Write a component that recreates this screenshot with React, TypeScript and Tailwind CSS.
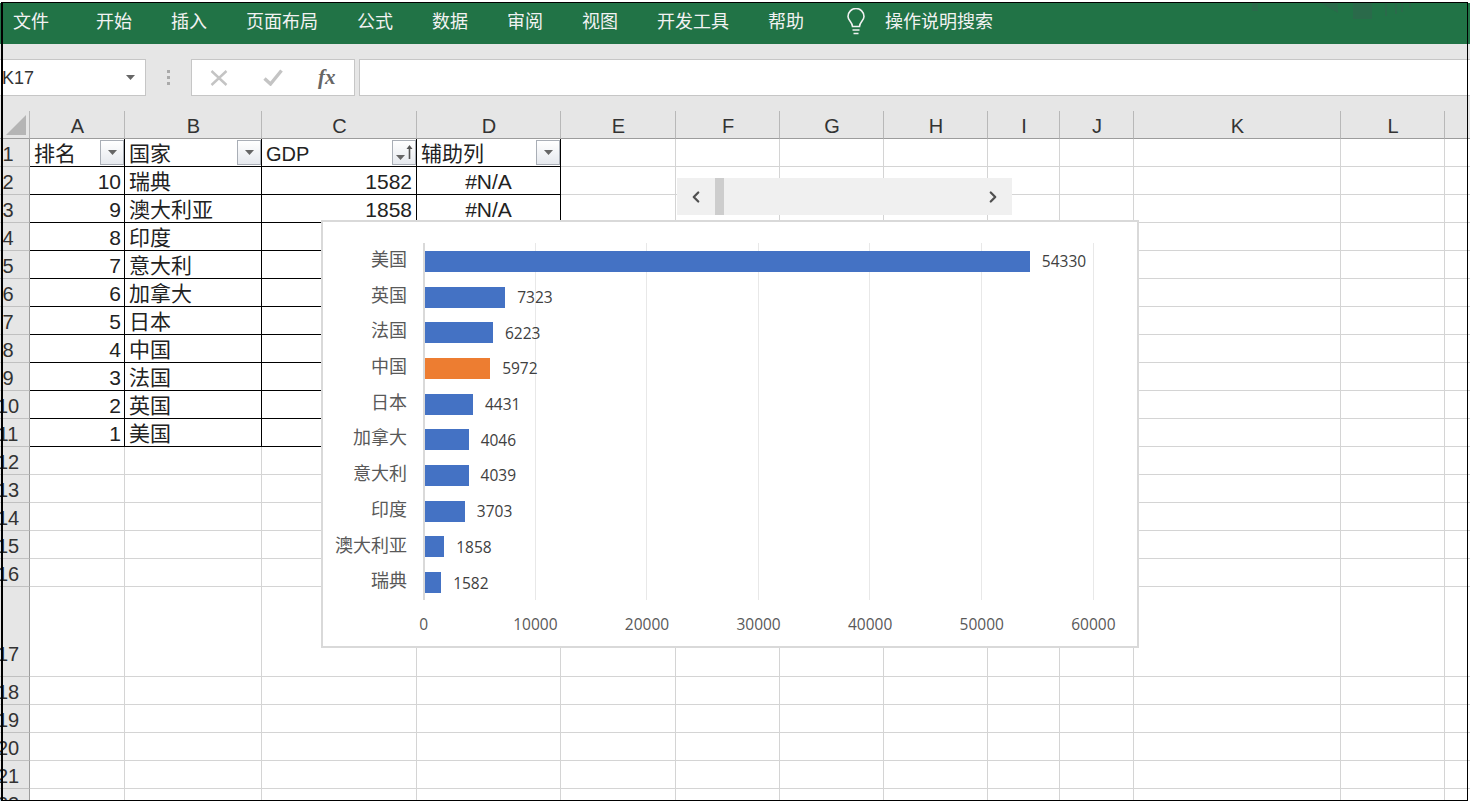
import { ChevronLeft, ChevronRight } from 'lucide-react'

const font = { fontFamily: '"Liberation Sans", "Noto Sans CJK SC", sans-serif' }

const TABS = ['开始', '插入', '页面布局', '公式', '数据', '审阅', '视图', '开发工具', '帮助']
const COLUMNS = [
  { name: 'A', width: 'w-[95px]' },
  { name: 'B', width: 'w-[137px]' },
  { name: 'C', width: 'w-[155px]' },
  { name: 'D', width: 'w-[144px]' },
  { name: 'E', width: 'w-[115px]' },
  { name: 'F', width: 'w-[104px]' },
  { name: 'G', width: 'w-[104px]' },
  { name: 'H', width: 'w-[104px]' },
  { name: 'I', width: 'w-[72px]' },
  { name: 'J', width: 'w-[74px]' },
  { name: 'K', width: 'w-[207px]' },
  { name: 'L', width: 'w-[104px]' },
  { name: '', width: 'w-[40px]' },
]

const DATA = [
  { rank: 10, country: '瑞典', gdp: 1582 },
  { rank: 9, country: '澳大利亚', gdp: 1858 },
  { rank: 8, country: '印度', gdp: 3703 },
  { rank: 7, country: '意大利', gdp: 4039 },
  { rank: 6, country: '加拿大', gdp: 4046 },
  { rank: 5, country: '日本', gdp: 4431 },
  { rank: 4, country: '中国', gdp: 5972 },
  { rank: 3, country: '法国', gdp: 6223 },
  { rank: 2, country: '英国', gdp: 7323 },
  { rank: 1, country: '美国', gdp: 54330 },
]
const CHART = [...DATA].reverse()
const TICKS = [0, 10000, 20000, 30000, 40000, 50000, 60000]
const PX_PER_UNIT = 111.6 / 10000

function Caret({ className = '' }: { className?: string }) {
  return (
    <svg width="9" height="5" viewBox="0 0 9 5" className={className}>
      <path d="M0 0H9L4.5 5Z" fill="#666" />
    </svg>
  )
}

function FilterButton({ sorted = false }: { sorted?: boolean }) {
  return (
    <div className="flex h-[25px] w-[24px] shrink-0 items-center justify-center gap-[1px] border border-[#a9aeb6] bg-gradient-to-b from-white to-[#e6e9ee]">
      <Caret className={sorted ? 'mt-[9px]' : ''} />
      {sorted && (
        <svg width="7" height="14" viewBox="0 0 7 14" className="mb-[2px]">
          <path d="M3.5 0L6.5 4H4.3V14H2.7V4H0.5Z" fill="#555" />
        </svg>
      )}
    </div>
  )
}

function RowHeader({ n, tall }: { n: number; tall?: boolean }) {
  return (
    <div
      className={`flex w-[43px] shrink-0 justify-center border-r border-b border-r-[#9c9c9c] border-b-[#c0c0c0] bg-[#e6e6e6] text-[20px] text-[#333] ${
        tall ? 'h-[90px] items-end pb-[7px]' : 'h-[28px] items-center pt-[2px]'
      }`}
    >
      {n}
    </div>
  )
}

function EmptyCells({ tall, from = 0 }: { tall?: boolean; from?: number }) {
  return (
    <>
      {COLUMNS.slice(from).map((col) => (
        <div
          key={col.name}
          className={`${col.width} shrink-0 border-r border-b border-[#d4d4d4] ${tall ? 'h-[90px]' : 'h-[28px]'}`}
        />
      ))}
    </>
  )
}

function Sheet() {
  const blank = Array.from({ length: 11 }, (_, i) => i + 12)
  return (
    <div className="ml-[-13px] flex flex-col">
      <div className="flex h-[28px] bg-[#e6e6e6] text-[20px] text-[#333]">
        <div className="flex w-[43px] shrink-0 items-end justify-end border-r border-b border-r-[#b8b8b8] border-b-[#9c9c9c] pr-[3px] pb-[3px]">
          <svg width="20" height="20" viewBox="0 0 20 20">
            <path d="M20 0V20H0Z" fill="#b5b5b5" />
          </svg>
        </div>
        {COLUMNS.map((col) => (
          <div
            key={col.name}
            className={`${col.width} flex shrink-0 items-center justify-center border-r border-b border-r-[#b8b8b8] border-b-[#9c9c9c] pt-[2px] pl-px`}
          >
            {col.name}
          </div>
        ))}
      </div>

      <div className="flex text-[21px] text-[#222]">
        <RowHeader n={1} />
        <div className="flex h-[28px] w-[95px] shrink-0 items-center justify-between border-r border-b border-black pl-[4px]">
          <span className="pt-[2px]">排名</span>
          <FilterButton />
        </div>
        <div className="flex h-[28px] w-[137px] shrink-0 items-center justify-between border-r border-b border-black pl-[4px]">
          <span className="pt-[2px]">国家</span>
          <FilterButton />
        </div>
        <div className="flex h-[28px] w-[155px] shrink-0 items-center justify-between border-r border-b border-black pl-[4px]">
          <span className="pt-[2px] text-[20px]">GDP</span>
          <FilterButton sorted />
        </div>
        <div className="flex h-[28px] w-[144px] shrink-0 items-center justify-between border-r border-b border-black pl-[4px]">
          <span className="pt-[2px]">辅助列</span>
          <FilterButton />
        </div>
        <EmptyCells from={4} />
      </div>

      {DATA.map((row, i) => (
        <div key={row.country} className="flex text-[21px] text-[#222]">
          <RowHeader n={i + 2} />
          <div className="flex h-[28px] w-[95px] shrink-0 items-center justify-end border-r border-b border-black pt-[2px] pr-[3px]">
            {row.rank}
          </div>
          <div className="flex h-[28px] w-[137px] shrink-0 items-center border-r border-b border-black pt-[2px] pl-[4px]">
            {row.country}
          </div>
          {/* the chart sits on top of these two columns from row 4 down */}
          <div className="flex h-[28px] w-[155px] shrink-0 items-center justify-end border-r border-b border-black pt-[2px] pr-[4px]">
            {i < 2 && row.gdp}
          </div>
          <div className="flex h-[28px] w-[144px] shrink-0 items-center justify-center border-r border-b border-black pt-[2px]">
            {i < 2 && '#N/A'}
          </div>
          <EmptyCells from={4} />
        </div>
      ))}

      {blank.map((n) => (
        <div key={n} className="flex">
          <RowHeader n={n} tall={n === 17} />
          <EmptyCells tall={n === 17} />
        </div>
      ))}
    </div>
  )
}

function Chart() {
  const chartFont = { fontFamily: '"Open Sans", "Noto Sans CJK SC", sans-serif' }
  return (
    <div
      className="absolute top-[220px] left-[321px] h-[428px] w-[818px] border-2 border-[#d9d9d9] bg-white"
      style={chartFont}
    >
      <div className="flex pt-[21px]">
        <div className="flex w-[100px] shrink-0 flex-col pr-[16px] text-right text-[18px] text-[#595959]">
          {CHART.map((item) => (
            <div key={item.country} className="h-[35.7px] leading-[33px]">
              {item.country}
            </div>
          ))}
        </div>
        <div className="relative h-[357px] w-[690px] border-l-2 border-[#d9d9d9] pt-[0.6px]">
          {TICKS.slice(1).map((tick) => (
            <div
              key={tick}
              className="absolute top-0 h-full w-px bg-[#e8e8e8]"
              style={{ left: tick * PX_PER_UNIT - 2 }}
            />
          ))}
          {CHART.map((item) => (
            <div key={item.country} className="relative flex h-[35.7px] items-center">
              <div
                className={`h-[21px] ${item.country === '中国' ? 'bg-[#ed7d31]' : 'bg-[#4472c4]'}`}
                style={{ width: item.gdp * PX_PER_UNIT - 1.5 }}
              />
              <span className="ml-[12px] pt-px text-[15.5px] text-[#404040]">{item.gdp}</span>
            </div>
          ))}
        </div>
      </div>
      <div className="mt-[13px] ml-[45px] flex text-[15.5px] text-[#595959]">
        {TICKS.map((tick) => (
          <div key={tick} className="w-[111.6px] shrink-0 text-center">
            {tick}
          </div>
        ))}
      </div>
    </div>
  )
}

export default function App() {
  return (
    <div className="relative h-[801px] w-[1470px] overflow-hidden bg-white" style={font}>
      <div className="h-[3px] bg-white" />
      <div
        className="relative flex h-[41px] items-center bg-[#217346] pb-[6px] pl-[13px] text-[18px] text-[#f2f2f2]"
        style={{ fontFamily: '"Noto Sans CJK SC", sans-serif' }}
      >
        <span className="mr-[47px]">文件</span>
        <div className="flex gap-[39px]">
          {TABS.map((tab) => (
            <span key={tab}>{tab}</span>
          ))}
        </div>
        <svg width="20" height="27" viewBox="0 0 20 27" fill="none" stroke="#f2f2f2" strokeWidth="1.6" className="mt-[2px] mr-[19px] ml-[42px]">
          <path d="M6.5 18.5C6.5 14 2 12.5 2 8.5A8 8 0 0 1 18 8.5C18 12.5 13.5 14 13.5 18.5Z" />
          <path d="M6.5 22H13.5M7.5 25.5H12.5" />
        </svg>
        <span>操作说明搜索</span>
        <div className="absolute top-0 left-[1252px] h-[8px] w-[6px] bg-[#2a6a4a]" />
        <svg width="17" height="10" viewBox="0 0 17 10" className="absolute top-0 left-[1321px]">
          <path d="M0 0H17V10Z" fill="#2a6a4a" />
        </svg>
        <div className="absolute top-0 left-[1353px] h-[16px] w-[19px] bg-[#2a6a4a]" />
        <div className="absolute top-0 left-[1385px] h-[13px] w-[2px] bg-[#2a6a4a]" />
        <div className="absolute top-0 left-[1395px] h-[11px] w-[2px] bg-[#2a6a4a]" />
        <div className="absolute top-0 left-[1401px] h-[9px] w-[2px] bg-[#2a6a4a]" />
        <div className="absolute top-0 left-[1409px] h-[5px] w-[2px] bg-[#2a6a4a]" />
      </div>

      <div className="flex h-[67px] items-start bg-[#e6e6e6] pt-[15px]">
        <div className="flex h-[37px] w-[146px] shrink-0 items-center justify-between border border-l-0 border-[#c6c6c6] bg-white pr-[10px] pl-[2px] text-[18px] text-[#333]">
          <span className="pt-px">K17</span>
          <Caret />
        </div>
        <div className="flex h-[37px] w-[45px] shrink-0 flex-col items-center justify-center gap-[3px]">
          <div className="h-[3px] w-[3px] bg-[#aaa]" />
          <div className="h-[3px] w-[3px] bg-[#aaa]" />
          <div className="h-[3px] w-[3px] bg-[#aaa]" />
        </div>
        <div className="flex h-[37px] w-[164px] shrink-0 items-center border border-[#c6c6c6] bg-white">
          <svg width="18" height="16" viewBox="0 0 18 16" className="ml-[18px]">
            <path d="M1.5 1L16.5 15M16.5 1L1.5 15" stroke="#c4c4c4" strokeWidth="2.4" />
          </svg>
          <svg width="20" height="17" viewBox="0 0 20 17" className="ml-[35px]">
            <path d="M1.5 9.5L7.5 15L18.5 1.5" fill="none" stroke="#c4c4c4" strokeWidth="3.4" />
          </svg>
          <span
            className="ml-[35px] text-[21px] font-bold text-[#666] italic"
            style={{ fontFamily: '"Liberation Serif", serif' }}
          >
            fx
          </span>
        </div>
        <div className="ml-[4px] h-[37px] flex-1 border border-r-0 border-[#c6c6c6] bg-white" />
      </div>

      <Sheet />
      <Chart />

      <div className="absolute top-[178px] left-[677px] flex h-[37px] w-[335px] items-center bg-[#f0f0f0] text-[#505050]">
        <ChevronLeft size={18} strokeWidth={3} className="ml-[10px]" />
        <div className="ml-[10px] h-full w-[9px] bg-[#cdcdcd]" />
        <ChevronRight size={18} strokeWidth={3} className="mr-[10px] ml-auto" />
      </div>

      <div className="pointer-events-none absolute top-[2px] left-[1px] h-[799px] w-[1467px] border-t border-r border-b border-l-2 border-black" />
    </div>
  )
}
